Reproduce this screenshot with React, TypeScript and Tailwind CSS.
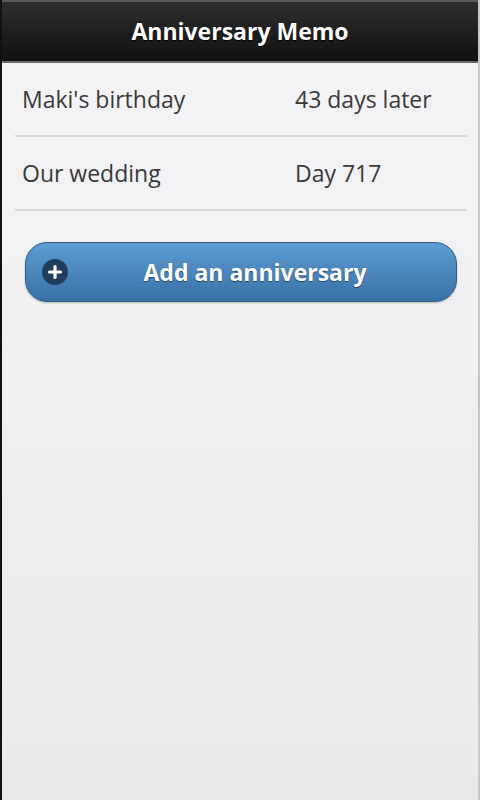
import React from "react";

export default function App() {
  const rows = [
    { name: "Maki's birthday", value: "43 days later" },
    { name: "Our wedding", value: "Day 717" },
  ];
  return (
    <div
      className="w-[480px] h-[800px] flex flex-col overflow-hidden border-l-2 border-l-[#111] border-r-2 border-r-[#c8c8c8] bg-gradient-to-b from-[#f4f3f5] via-[#f0eff1] to-[#eaeaea]"
      style={{ fontFamily: '"Open Sans", "DejaVu Sans", sans-serif' }}
    >
      <div className="h-[63px] shrink-0 flex items-center justify-center border-t-2 border-t-[#5a5a5a] border-b-2 border-b-[#6a6a6a] bg-gradient-to-b from-[#2e2e2e] to-[#111111]">
        <span className="text-white font-bold text-[23px] leading-none [text-shadow:0_1px_1px_#000]">
          Anniversary Memo
        </span>
      </div>
      <div className="pl-[13px] pr-[11px]">
        {rows.map((r) => (
          <div
            key={r.name}
            className="h-[74px] flex items-center border-b-2 border-b-[#d8d8d8] text-[#3a3a3a] text-[23px]"
          >
            <span className="pl-[7px] w-[280px]">{r.name}</span>
            <span>{r.value}</span>
          </div>
        ))}
      </div>
      <div className="pl-[23px] pr-[21px] pt-[31px]">
        <button className="w-full h-[60px] rounded-[22px] border border-[#2b5c8c] bg-gradient-to-b from-[#5c9dd2] to-[#3a70a6] flex items-center shadow-[0_1px_2px_rgba(0,0,0,0.25)]">
          <span className="ml-[16px] w-[26px] h-[26px] rounded-full bg-[#1f3e5e] flex items-center justify-center shrink-0">
            <svg width="16" height="16" viewBox="0 0 16 16">
              <path d="M8 2.5v11M2.5 8h11" stroke="#fff" strokeWidth="3.2" strokeLinecap="round" />
            </svg>
          </span>
          <span className="flex-1 text-center text-white font-bold text-[23px] pr-[14px] [text-shadow:0_1px_1px_rgba(0,0,0,0.45)]">
            Add an anniversary
          </span>
        </button>
      </div>
    </div>
  );
}
